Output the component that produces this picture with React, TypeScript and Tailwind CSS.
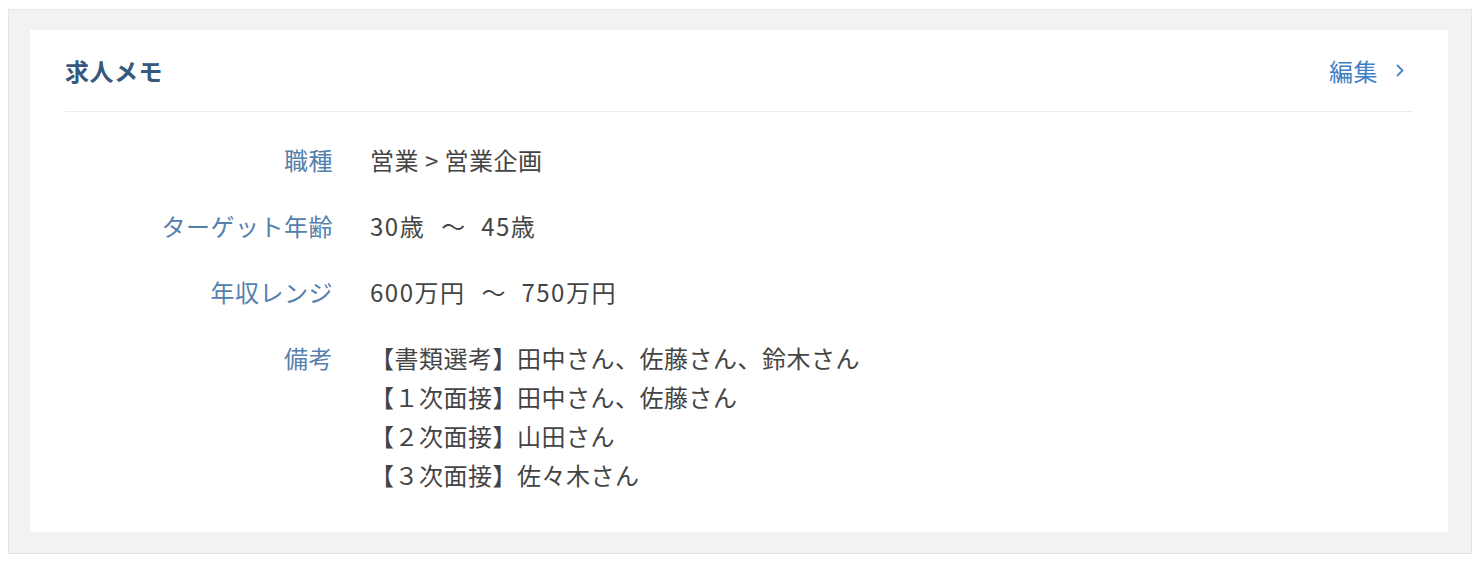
import React from "react";

const font = {
  fontFamily: '"Noto Sans CJK JP", "Noto Sans", sans-serif',
};

type Row = { label: string; lines: React.ReactNode[] };

// Range values like "30歳 ～ 45歳" get extra air around the tilde
const Range = ({ from, to }: { from: string; to: string }) => (
  <span className="tracking-[1.5px]">
    {from}
    <span className="mx-[16px] tracking-normal">～</span>
    {to}
  </span>
);

const rows: Row[] = [
  { label: "職種", lines: ["営業 > 営業企画"] },
  { label: "ターゲット年齢", lines: [<Range key="a" from="30歳" to="45歳" />] },
  { label: "年収レンジ", lines: [<Range key="s" from="600万円" to="750万円" />] },
  {
    label: "備考",
    lines: [
      "【書類選考】田中さん、佐藤さん、鈴木さん",
      "【１次面接】田中さん、佐藤さん",
      "【２次面接】山田さん",
      "【３次面接】佐々木さん",
    ],
  },
];

export default function App() {
  return (
    <div className="w-full h-[562px] bg-white pt-[9px] pl-[8px] pr-[10px]" style={font}>
      <div className="h-[545px] border border-[#e4e4e4] bg-[#f2f2f2] pt-[20px] pb-[21px] pl-[21px] pr-[23px]">
        <div className="h-[502px] bg-white px-[35px]">
          <div className="h-[82px] flex items-center justify-between border-b border-[#ececec]">
            <h2 className="text-[24px] font-bold text-[#34597d] tracking-[0.5px]">求人メモ</h2>
            <a className="flex items-center gap-[18px] text-[24px] text-[#3f7fc6] pr-[9px] tracking-[0.5px]">
              <span>編集</span>
              <svg width="8" height="13" viewBox="0 0 8 13" fill="none">
                <polyline
                  points="1.5,1.5 6.5,6.5 1.5,11.5"
                  stroke="#4a86c8"
                  strokeWidth="1.8"
                  strokeLinecap="round"
                  strokeLinejoin="round"
                />
              </svg>
            </a>
          </div>
          <div className="pt-[28px] flex flex-col gap-[27px]">
            {rows.map((r) => (
              <div key={r.label} className="flex">
                <div className="w-[268px] shrink-0 text-right text-[24px] leading-[39px] text-[#5480ad] tracking-[0.5px]">
                  {r.label}
                </div>
                <div className="pl-[37px] text-[24px] leading-[39px] text-[#444444] tracking-[0.5px]">
                  {r.lines.map((l, i) => (
                    <div key={i} className="whitespace-pre">{l}</div>
                  ))}
                </div>
              </div>
            ))}
          </div>
        </div>
      </div>
    </div>
  );
}
